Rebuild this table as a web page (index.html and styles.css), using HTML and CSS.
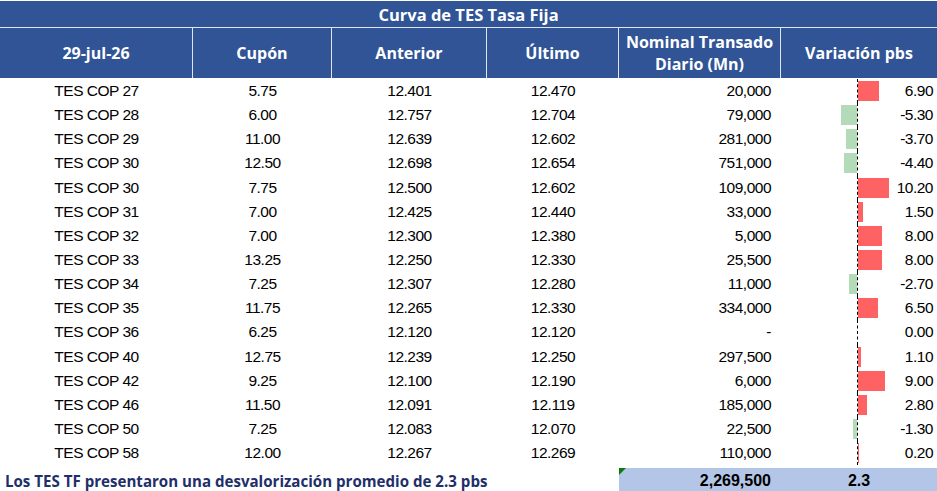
FILE: index.html
```html
<!DOCTYPE html>
<html lang="es">
<head>
<meta charset="utf-8">
<title>Curva de TES Tasa Fija</title>
<link rel="stylesheet" href="styles.css">
</head>
<body>
<div class="sheet">
  <div class="title">Curva de TES Tasa Fija</div>
  <div class="head">
    <div class="hc">29-jul-26</div>
    <div class="hc">Cupón</div>
    <div class="hc">Anterior</div>
    <div class="hc">Último</div>
    <div class="hc">Nominal Transado<br>Diario (Mn)</div>
    <div class="hc">Variación pbs</div>
  </div>
  <div class="body" id="rows"></div>
  <div class="foot">
    <div class="note">Los TES TF presentaron una desvalorización promedio de 2.3 pbs</div>
    <div class="total"><span class="flag"></span>2,269,500</div>
    <div class="avg">2.3</div>
  </div>
</div>
<script>
const data = [
  ["TES COP 27","5.75","12.401","12.470","20,000",6.90],
  ["TES COP 28","6.00","12.757","12.704","79,000",-5.30],
  ["TES COP 29","11.00","12.639","12.602","281,000",-3.70],
  ["TES COP 30","12.50","12.698","12.654","751,000",-4.40],
  ["TES COP 30","7.75","12.500","12.602","109,000",10.20],
  ["TES COP 31","7.00","12.425","12.440","33,000",1.50],
  ["TES COP 32","7.00","12.300","12.380","5,000",8.00],
  ["TES COP 33","13.25","12.250","12.330","25,500",8.00],
  ["TES COP 34","7.25","12.307","12.280","11,000",-2.70],
  ["TES COP 35","11.75","12.265","12.330","334,000",6.50],
  ["TES COP 36","6.25","12.120","12.120","-",0.00],
  ["TES COP 40","12.75","12.239","12.250","297,500",1.10],
  ["TES COP 42","9.25","12.100","12.190","6,000",9.00],
  ["TES COP 46","11.50","12.091","12.119","185,000",2.80],
  ["TES COP 50","7.25","12.083","12.070","22,500",-1.30],
  ["TES COP 58","12.00","12.267","12.269","110,000",0.20]
];
const scale = 3.05;
const rows = document.getElementById("rows");
data.forEach(d => {
  const r = document.createElement("div");
  r.className = "row";
  const v = d[5];
  const w = Math.abs(v) * scale;
  let bar = "";
  if (v > 0) bar = `<span class="bar pos" style="width:${w.toFixed(1)}px"></span>`;
  else if (v < 0) bar = `<span class="bar neg" style="width:${w.toFixed(1)}px"></span>`;
  r.innerHTML =
    `<div class="c name">${d[0]}</div>` +
    `<div class="c">${d[1]}</div>` +
    `<div class="c">${d[2]}</div>` +
    `<div class="c">${d[3]}</div>` +
    `<div class="c num">${d[4]}</div>` +
    `<div class="c var"><div class="bars"><div class="left">${v < 0 ? bar : ""}</div><div class="right">${v > 0 ? bar : ""}</div></div><span class="val">${v.toFixed(2)}</span></div>`;
  rows.appendChild(r);
});
</script>
</body>
</html>
```

FILE: styles.css
```css
html, body {
  margin: 0;
  padding: 0;
  background: #ffffff;
}

.sheet {
  width: 937px;
  display: flex;
  flex-direction: column;
  font-family: "Liberation Sans", Arial, sans-serif;
}

.title {
  height: 26px;
  margin-top: 1px;
  background: #305496;
  color: #ffffff;
  font-family: "Open Sans", "Lato", sans-serif;
  font-weight: 700;
  font-size: 16.5px;
  display: flex;
  align-items: center;
  justify-content: center;
  border-bottom: 1px solid #dfe6f2;
}

.head {
  display: grid;
  grid-template-columns: 193px 139px 155px 132px 162px 156px;
  height: 50px;
  background: #305496;
}

.hc {
  color: #ffffff;
  font-family: "Open Sans", "Lato", sans-serif;
  font-weight: 700;
  font-size: 16px;
  line-height: 22px;
  display: flex;
  align-items: center;
  justify-content: center;
  text-align: center;
  border-right: 1px solid #dfe6f2;
}

.hc:last-child {
  border-right: none;
}

.body {
  display: flex;
  flex-direction: column;
  padding-top: 1px;
}

.row {
  display: grid;
  grid-template-columns: 193px 139px 155px 132px 162px 156px;
  height: 24.15px;
}

.c {
  font-size: 15.5px;
  letter-spacing: -0.5px;
  color: #000000;
  display: flex;
  align-items: center;
  justify-content: center;
}

.num {
  justify-content: flex-end;
  padding-right: 10px;
}

.var {
  position: relative;
  justify-content: flex-end;
  padding-right: 4px;
}

.bars {
  position: absolute;
  top: 0;
  bottom: 0;
  left: 0;
  right: 0;
  display: grid;
  grid-template-columns: 77px 1fr;
}

.left {
  display: flex;
  justify-content: flex-end;
  align-items: center;
  border-right: 1px dashed #000000;
}

.right {
  display: flex;
  justify-content: flex-start;
  align-items: center;
}

.bar {
  display: block;
  height: 20px;
}

.bar.pos {
  background: #ff6262;
}

.bar.neg {
  background: #b3dbb7;
}

.val {
  position: relative;
}

.foot {
  display: grid;
  grid-template-columns: 619px 162px 156px;
  height: 25px;
  margin-top: 3px;
}

.note {
  color: #1f2f6b;
  font-family: "Open Sans", "Lato", sans-serif;
  font-weight: 700;
  font-size: 15.1px;
  display: flex;
  align-items: center;
  padding-left: 5px;
}

.total, .avg {
  background: #b4c6e7;
  font-weight: 700;
  font-size: 16px;
  color: #000000;
  display: flex;
  align-items: center;
}

.total {
  position: relative;
  justify-content: flex-end;
  padding-right: 10px;
}

.avg {
  justify-content: center;
}

.flag {
  position: absolute;
  left: 0;
  top: 0;
  width: 0;
  height: 0;
  border-top: 7px solid #0a7a0a;
  border-right: 7px solid transparent;
}
```
